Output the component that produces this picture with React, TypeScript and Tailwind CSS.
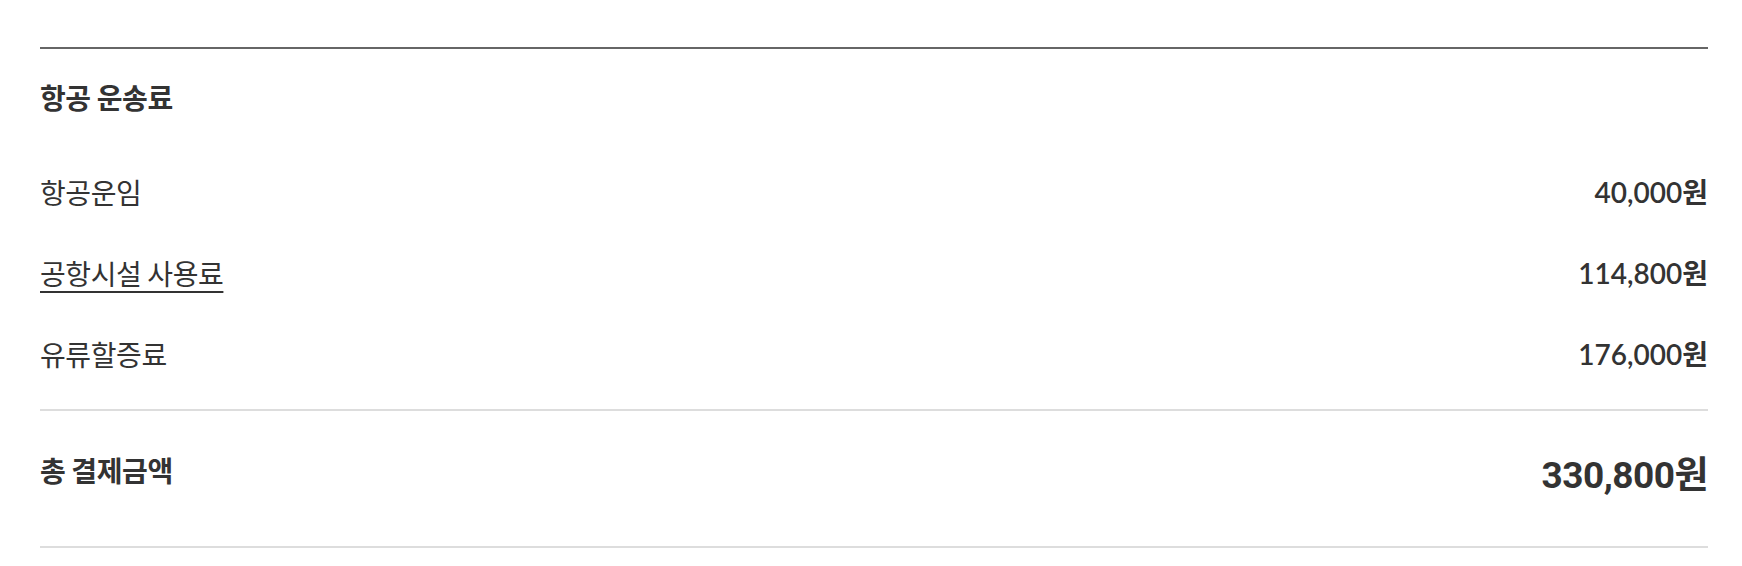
const rows = [
  { label: "항공운임", amount: "40,000원", link: false },
  { label: "공항시설 사용료", amount: "114,800원", link: true },
  { label: "유류할증료", amount: "176,000원", link: false },
];

export default function App() {
  return (
    <div className="min-h-screen bg-white pl-[40px] pr-[34px] pt-[47px] text-[#333] font-['Lato','Noto_Sans_CJK_KR',sans-serif]">
      <div className="border-t-2 border-[#666]">
        <h2 className="pt-[34px] text-[28px] leading-[28px] font-bold font-['Noto_Sans_CJK_KR',sans-serif] tracking-[-0.4px]">
          항공 운송료
        </h2>

        <ul className="pt-[40px] pb-[15px]">
          {rows.map((row) => (
            <li key={row.label} className="flex items-center justify-between h-[81px]">
              <span
                className={
                  "text-[28px] leading-[28px] font-['Noto_Sans_CJK_KR',sans-serif] tracking-[-0.4px] " +
                  (row.link ? "underline underline-offset-[6px] decoration-[1.5px]" : "")
                }
              >
                {row.label}
              </span>
              <span className="text-[28px] leading-[28px] font-semibold">{row.amount}</span>
            </li>
          ))}
        </ul>

        <div className="flex items-start justify-between border-t-2 border-b-2 border-t-[#ddd] border-b-[#ddd] h-[139px] pt-[45px]">
          <span className="text-[28px] leading-[28px] font-bold font-['Noto_Sans_CJK_KR',sans-serif] tracking-[-0.4px]">
            총 결제금액
          </span>
          <span className="text-[37px] leading-[40px] font-bold font-['Roboto','Noto_Sans_CJK_KR',sans-serif] tracking-[-0.5px]">
            330,800원
          </span>
        </div>
      </div>
    </div>
  );
}
